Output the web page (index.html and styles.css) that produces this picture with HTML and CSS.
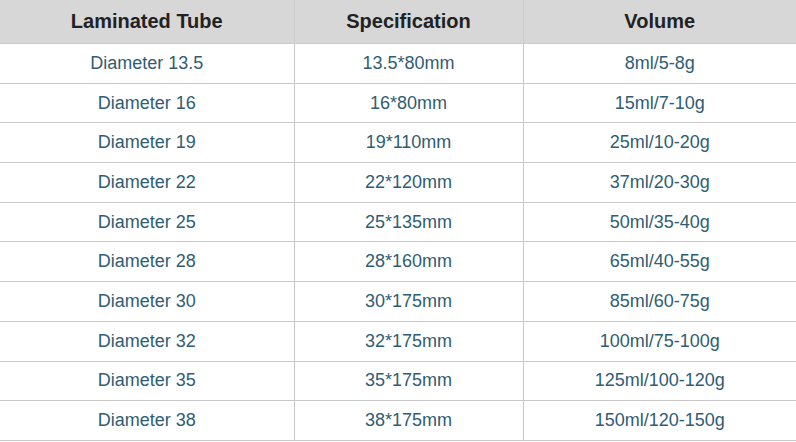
FILE: index.html
```html
<!DOCTYPE html>
<html>
<head>
<meta charset="utf-8">
<link rel="stylesheet" href="styles.css">
</head>
<body>
<table class="spec">
  <colgroup>
    <col class="c1"><col class="c2"><col class="c3">
  </colgroup>
  <thead>
    <tr><th>Laminated Tube</th><th>Specification</th><th>Volume</th></tr>
  </thead>
  <tbody>
    <tr><td>Diameter 13.5</td><td>13.5*80mm</td><td>8ml/5-8g</td></tr>
    <tr><td>Diameter 16</td><td>16*80mm</td><td>15ml/7-10g</td></tr>
    <tr><td>Diameter 19</td><td>19*110mm</td><td>25ml/10-20g</td></tr>
    <tr><td>Diameter 22</td><td>22*120mm</td><td>37ml/20-30g</td></tr>
    <tr><td>Diameter 25</td><td>25*135mm</td><td>50ml/35-40g</td></tr>
    <tr><td>Diameter 28</td><td>28*160mm</td><td>65ml/40-55g</td></tr>
    <tr><td>Diameter 30</td><td>30*175mm</td><td>85ml/60-75g</td></tr>
    <tr><td>Diameter 32</td><td>32*175mm</td><td>100ml/75-100g</td></tr>
    <tr><td>Diameter 35</td><td>35*175mm</td><td>125ml/100-120g</td></tr>
    <tr><td>Diameter 38</td><td>38*175mm</td><td>150ml/120-150g</td></tr>
  </tbody>
</table>
</body>
</html>
```

FILE: styles.css
```css
html, body {
  margin: 0;
  padding: 0;
  background: #ffffff;
}
.spec {
  width: 796px;
  border-collapse: collapse;
  table-layout: fixed;
  font-family: "Liberation Sans", Arial, sans-serif;
}
.c1 { width: 294px; }
.c2 { width: 229px; }
.c3 { width: 273px; }
.spec th {
  background: #d7d7d7;
  color: #222222;
  font-size: 20px;
  font-weight: bold;
  height: 43px;
  padding: 0 0 0 0;
  text-align: center;
  border: 1px solid #cccccc;
  border-top: none;
}
.spec td {
  color: #2f5d74;
  font-size: 18px;
  height: 38.7px;
  padding: 0;
  text-align: center;
  border: 1px solid #c8c8c8;
}
.spec th:first-child, .spec td:first-child { border-left: none; }
.spec th:last-child, .spec td:last-child { border-right: none; }
```
